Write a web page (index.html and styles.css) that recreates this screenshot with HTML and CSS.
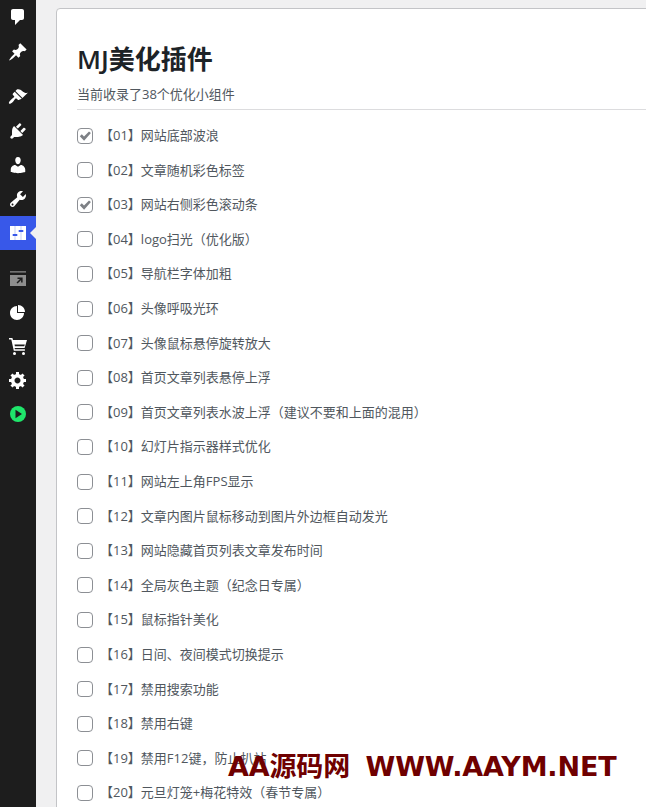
FILE: index.html
```
<!DOCTYPE html>
<html lang="zh-CN">
<head>
<meta charset="utf-8">
<title>MJ美化插件</title>
<link rel="stylesheet" href="styles.css">
</head>
<body>
<div class="app">
  <nav class="sidebar">
    <a class="nav-item"><svg class="ico" viewBox="0 0 20 20"><path d="M5 2h9c1.100 0 2 .9 2 2v7c0 1.100-.9 2-2 2h-2l-5 5v-5H5c-1.100 0-2-.9-2-2V4c0-1.100.9-2 2-2z"/></svg></a>
    <a class="nav-item gap-1"><svg class="ico" viewBox="0 0 20 20"><path d="M10.440 3.020l1.820-1.820 6.360 6.350-1.830 1.820c-1.050-.68-2.480-.57-3.410.36l-.75.75c-.92.93-1.040 2.350-.35 3.410l-1.830 1.820-2.410-2.410-2.800 2.790c-.42.42-3.380 2.710-3.800 2.290s1.860-3.390 2.280-3.810l2.790-2.790L4.100 9.360l1.830-1.820c1.050.69 2.480.57 3.400-.36l.75-.75c.93-.92 1.050-2.350.36-3.410z"/></svg></a>
    <a class="nav-item gap-2"><svg class="ico" viewBox="0 0 20 20"><path d="M14.480 11.060L7.410 3.990l1.500-1.500c.5-.56 2.300-.47 3.510.32 1.210.8 1.430 1.280 2.910 2.100 1.180.64 2.450 1.260 4.450.85zm-.71.71L6.700 4.700 4.930 6.470c-.39.39-.39 1.020 0 1.410l1.060 1.060c.39.39.39 1.030 0 1.420-.6.6-1.430 1.110-2.210 1.690-.35.26-.7.53-1.010.84-1.340 1.340-2.410 3.020-1.700 3.720.7.7 2.380-.36 3.720-1.700.31-.31.58-.66.84-1.010.58-.78 1.090-1.610 1.690-2.210.39-.39 1.030-.39 1.420 0l1.060 1.060c.39.39 1.020.39 1.410 0z"/></svg></a>
    <a class="nav-item"><svg class="ico" viewBox="0 0 20 20"><path d="M13.110 4.360L9.870 7.600 8 5.730l3.240-3.240c.35-.34 1.050-.2 1.560.32.52.51.66 1.210.31 1.550zm-8 1.770l.91-1.120 9.010 9.010-1.190.84c-.71.71-2.630 1.160-3.820 1.160H6.140L4.900 17.260c-.59.59-1.540.59-2.120 0-.59-.58-.59-1.530 0-2.120l1.240-1.240v-3.880c0-1.130.4-3.190 1.090-3.890zm7.260 3.970l3.240-3.240c.34-.35 1.040-.21 1.550.31.52.51.66 1.210.32 1.550l-3.250 3.250z"/></svg></a>
    <a class="nav-item"><svg class="ico" viewBox="0 0 20 20"><path d="M10 9.250c-2.270 0-2.730-3.440-2.730-3.440C7 4.020 7.820 2 9.970 2c2.160 0 2.980 2.020 2.710 3.810 0 0-.41 3.440-2.680 3.440zm0 2.570L12.720 10c2.390 0 4.520 2.330 4.520 4.530v2.490s-3.650 1.130-7.240 1.130c-3.650 0-7.240-1.130-7.240-1.130v-2.490c0-2.250 1.940-4.480 4.470-4.480z"/></svg></a>
    <a class="nav-item"><svg class="ico" viewBox="0 0 20 20"><path d="M16.680 9.770c-1.340 1.340-3.300 1.670-4.950.99l-5.410 6.520c-.99.99-2.590.99-3.580 0s-.99-2.590 0-3.570l6.520-5.420c-.68-1.650-.35-3.610.99-4.950 1.280-1.280 3.120-1.620 4.720-1.060l-2.890 2.890 2.820 2.820 2.860-2.870c.53 1.580.18 3.390-1.080 4.650zM3.810 16.210c.4.39 1.040.39 1.430 0 .4-.4.4-1.040 0-1.430-.39-.4-1.030-.4-1.430 0-.39.39-.39 1.030 0 1.430z"/></svg></a>
    <a class="nav-item active"><svg class="ico" viewBox="0 0 20 20"><rect x="2" y="3" width="16" height="14"/><rect class="slide-line" x="6.500" y="3" width="1" height="14"/><rect class="slide-line" x="12.500" y="3" width="1" height="14"/><rect class="slide-knob" x="4.700" y="11" width="4.600" height="2"/><rect class="slide-knob" x="10.700" y="7" width="4.600" height="2"/></svg></a>
    <a class="nav-item gap-3"><svg class="ico dim" viewBox="0 0 20 20"><path d="M2 3.300h16v1.200H2zM2 7h16v11H2zm7.500 2.500v1.500h2.500l-3.500 3.500 1.100 1.100 3.500-3.500v2.500h1.500V9.500z" fill-rule="evenodd"/></svg></a>
    <a class="nav-item"><svg class="ico" viewBox="0 0 20 20"><path d="M10 10V3c3.870 0 7 3.130 7 7h-7zM9 4v7h7c0 3.870-3.130 7-7 7s-7-3.130-7-7 3.130-7 7-7z"/></svg></a>
    <a class="nav-item"><svg class="ico" viewBox="0 0 20 20"><path d="M1 2h3.400l.6 2h14l-2.400 8H6.600l.3 1.300h10v1.400H5.800L3.300 3.400H1zM6.500 8.400l.4 1.800h9.400l.5-1.800zM6.500 16a1.500 1.500 0 1 1 0 3 1.500 1.500 0 0 1 0-3zm9 0a1.500 1.500 0 1 1 0 3 1.500 1.500 0 0 1 0-3z" fill-rule="evenodd"/></svg></a>
    <a class="nav-item"><svg class="ico" viewBox="0 0 20 20"><path d="M18 12h-2.180c-.17.7-.44 1.350-.81 1.930l1.540 1.540-2.100 2.100-1.540-1.540c-.58.36-1.230.63-1.910.79V19H8v-2.180c-.68-.16-1.330-.43-1.910-.79l-1.540 1.540-2.120-2.120 1.540-1.540c-.36-.58-.63-1.230-.79-1.910H1V9.030h2.170c.16-.7.44-1.350.8-1.940L2.430 5.550l2.100-2.100 1.540 1.540c.58-.37 1.240-.64 1.930-.81V2h3v2.180c.68.16 1.330.43 1.910.79l1.540-1.540 2.120 2.120-1.540 1.540c.36.59.64 1.240.8 1.940H18V12zm-8.500 1.500c1.660 0 3-1.340 3-3s-1.340-3-3-3-3 1.340-3 3 1.340 3 3 3z"/></svg></a>
    <a class="nav-item"><svg class="ico" viewBox="0 0 20 20"><circle class="play-bg" cx="10" cy="10" r="8"/><path class="play-fg" d="M7.500 5.800l6.500 4.200-6.500 4.200z"/></svg></a>
  </nav>
  <main class="content">
    <section class="card">
      <h1 class="title">MJ美化插件</h1>
      <p class="subtitle">当前收录了38个优化小组件</p>
      <ul class="list">
        <li class="row"><span class="box checked"><svg viewBox="0 0 16 16"><path d="M2.800 8.200l2-2 2.200 2.200L12 3.500l1.900 1.600-6.800 7.700z"/></svg></span><span class="label">【01】网站底部波浪</span></li>
        <li class="row"><span class="box"></span><span class="label">【02】文章随机彩色标签</span></li>
        <li class="row"><span class="box checked"><svg viewBox="0 0 16 16"><path d="M2.800 8.200l2-2 2.200 2.200L12 3.500l1.900 1.600-6.800 7.700z"/></svg></span><span class="label">【03】网站右侧彩色滚动条</span></li>
        <li class="row"><span class="box"></span><span class="label">【04】logo扫光（优化版）</span></li>
        <li class="row"><span class="box"></span><span class="label">【05】导航栏字体加粗</span></li>
        <li class="row"><span class="box"></span><span class="label">【06】头像呼吸光环</span></li>
        <li class="row"><span class="box"></span><span class="label">【07】头像鼠标悬停旋转放大</span></li>
        <li class="row"><span class="box"></span><span class="label">【08】首页文章列表悬停上浮</span></li>
        <li class="row"><span class="box"></span><span class="label">【09】首页文章列表水波上浮（建议不要和上面的混用）</span></li>
        <li class="row"><span class="box"></span><span class="label">【10】幻灯片指示器样式优化</span></li>
        <li class="row"><span class="box"></span><span class="label">【11】网站左上角FPS显示</span></li>
        <li class="row"><span class="box"></span><span class="label">【12】文章内图片鼠标移动到图片外边框自动发光</span></li>
        <li class="row"><span class="box"></span><span class="label">【13】网站隐藏首页列表文章发布时间</span></li>
        <li class="row"><span class="box"></span><span class="label">【14】全局灰色主题（纪念日专属）</span></li>
        <li class="row"><span class="box"></span><span class="label">【15】鼠标指针美化</span></li>
        <li class="row"><span class="box"></span><span class="label">【16】日间、夜间模式切换提示</span></li>
        <li class="row"><span class="box"></span><span class="label">【17】禁用搜索功能</span></li>
        <li class="row"><span class="box"></span><span class="label">【18】禁用右键</span></li>
        <li class="row"><span class="box"></span><span class="label">【19】禁用F12键，防止扒站</span></li>
        <li class="row"><span class="box"></span><span class="label">【20】元旦灯笼+梅花特效（春节专属）</span></li>
      </ul>
    </section>
  </main>
</div>
<div class="watermark">AA源码网&nbsp;&nbsp;WWW.AAYM.NET</div>
</body>
</html>
```
FILE: styles.css
```
* { box-sizing: border-box; }
html, body { margin: 0; height: 100%; overflow: hidden; }
body {
  background: #f0f0f1;
  color: #50575e;
  font: 13px/1.4 "Open Sans", "Noto Sans CJK SC", sans-serif;
}
.app { display: flex; height: 807px; overflow: hidden; }
.sidebar {
  flex: 0 0 36px;
  background: #1d1d1d;
  display: flex;
  flex-direction: column;
}
.nav-item {
  height: 34px;
  display: flex;
  align-items: center;
  justify-content: center;
  position: relative;
}
.gap-1 { margin-top: 1px; }
.gap-2 { margin-top: 11px; }
.gap-3 { margin-top: 11px; }
.ico { width: 20px; height: 20px; fill: #fff; }
.ico.dim { fill: #8e8e8e; }
.play-bg { fill: #1fe66b; }
.play-fg { fill: #1d1d1d; }
.nav-item.active { background: #3858e9; }
.slide-line { fill: #c4cef8; }
.slide-knob { fill: #3858e9; }
.nav-item.active::after {
  content: "";
  position: absolute;
  right: 0;
  top: 11px;
  border: 6px solid transparent;
  border-right-color: #f0f0f1;
  border-left-width: 0;
}
.content { flex: 1; padding: 8px 0 0 20px; min-width: 0; overflow: hidden; }
.card {
  width: 640px;
  min-height: 900px;
  background: #fff;
  border: 1px solid #c3c4c7;
  border-radius: 4px;
  padding: 32px 20px 0;
}
.title {
  margin: 0;
  font-size: 26px;
  line-height: 36px;
  font-weight: 600;
  color: #1d2327;
}
.subtitle {
  margin: 8px 0 0;
  font-size: 13px;
  line-height: 18px;
  color: #50575e;
}
.list {
  list-style: none;
  margin: 6px 0 0;
  padding: 7.8px 0 0;
  border-top: 1px solid #dcdcde;
}
.row { height: 34.6px; display: flex; align-items: center; }
.box {
  flex: 0 0 16px;
  width: 16px;
  height: 16px;
  margin: 1px 7px 0 0;
  border: 1px solid #8c8f94;
  border-radius: 4px;
  background: #fff;
  display: flex;
}
.box svg { flex: 0 0 16px; width: 16px; height: 16px; margin: -1px; fill: #7d8085; }
.label { font-size: 13px; color: #50575e; white-space: nowrap; text-spacing-trim: space-all; }
.watermark {
  position: absolute;
  left: 228px;
  top: 751px;
  font: 700 27px/32px "DejaVu Sans", "Noto Sans CJK SC", sans-serif;
  letter-spacing: -0.15px;
  word-spacing: -1.5px;
  color: #6f0000;
  white-space: nowrap;
}
```
